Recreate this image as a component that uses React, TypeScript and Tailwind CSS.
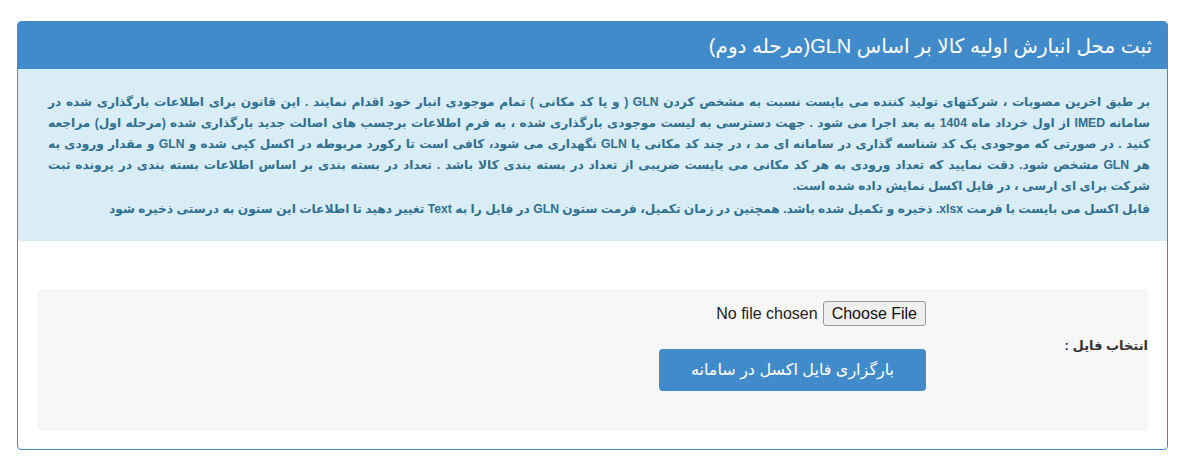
const notice = [
  "بر طبق اخرین مصوبات ، شرکتهای تولید کننده می بایست نسبت به مشخص کردن GLN ( و یا کد مکانی ) تمام موجودی انبار خود اقدام نمایند . این قانون برای اطلاعات بارگذاری شده در",
  "سامانه IMED از اول خرداد ماه 1404 به بعد اجرا می شود . جهت دسترسی به لیست موجودی بارگذاری شده ، به فرم اطلاعات برچسب های اصالت جدید بارگذاری شده (مرحله اول) مراجعه",
  "کنید . در صورتی که موجودی یک کد شناسه گذاری در سامانه ای مد ، در چند کد مکانی یا GLN نگهداری می شود، کافی است تا رکورد مربوطه در اکسل کپی شده و GLN و مقدار ورودی به",
  "هر GLN مشخص شود. دقت نمایید که تعداد ورودی به هر کد مکانی می بایست ضریبی از تعداد در بسته بندی کالا باشد . تعداد در بسته بندی بر اساس اطلاعات بسته بندی در پرونده ثبت",
];

export default function App() {
  return (
    <div
      dir="rtl"
      className="min-h-screen bg-white pt-[21px] pl-[17px] pr-[16px] font-['Liberation_Sans','DejaVu_Sans',sans-serif]"
    >
      <div className="border border-[#428bca] rounded-[4px] overflow-hidden">
        {/* Heading */}
        <div className="bg-[#428bca] h-[47px] px-[15px] flex items-center text-white text-[20px]">
          ثبت محل انبارش اولیه کالا بر اساس GLN(مرحله دوم)
        </div>

        {/* Notice */}
        <div className="bg-[#d9edf7] text-[#31708f] text-[12.2px] font-bold leading-[21px] pr-[17px] pl-[30px] pt-[23px] pb-[21px]">
          {notice.map((line) => (
            <div key={line} className="whitespace-nowrap text-justify [text-align-last:justify]">
              {line}
            </div>
          ))}
          <div>شرکت برای ای ارسی ، در فایل اکسل نمایش داده شده است.</div>
          <div className="mt-[2px]">
            فابل اکسل می بایست با فرمت xlsx. ذخیره و تکمیل شده باشد. همچنین در زمان تکمیل، فرمت ستون GLN در فایل را
            به Text تغییر دهید تا اطلاعات این ستون به درستی ذخیره شود
          </div>
        </div>

        {/* Body */}
        <div className="pt-[48px] px-[19px] pb-[18px]">
          <div className="bg-[#f7f7f7] rounded-[4px] h-[142px] pt-[12px] flex items-start">
            <div className="w-[222px] h-[90px] flex items-center text-[13px] font-bold text-[#333]">
              انتخاب فایل :
            </div>
            <div className="flex flex-col items-start gap-[23px]">
              <input
                type="file"
                className="text-[16px] text-[#222] font-['Liberation_Sans',sans-serif] file:h-[25px] file:px-[8px] file:bg-[#efefef] file:border file:border-[#9a9a9a] file:rounded-[3px] file:text-[#111] file:ml-[5px]"
              />
              <button className="w-[267px] h-[42px] rounded-[4px] bg-[#428bca] text-white text-[16px]">
                بارگزاری فایل اکسل در سامانه
              </button>
            </div>
          </div>
        </div>
      </div>
    </div>
  );
}
